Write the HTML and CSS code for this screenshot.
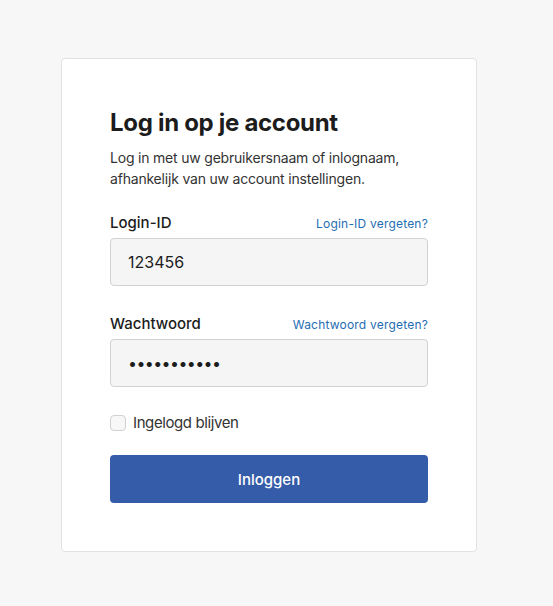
FILE: index.html
```html
<!DOCTYPE html>
<html>
<head>
    <title>Log in op je account</title>
    <meta name="viewport" content="width=device-width, initial-scale=1.0">
    <link rel="stylesheet" href="styles.css">
</head>
<body>
    <div class="card">
        <h1 class="title">Log in op je account</h1>
        <p class="intro">Log in met uw gebruikersnaam of inlognaam, afhankelijk van uw account instellingen.</p>

        <div class="field">
            <div class="field-head">
                <label for="login-id">Login-ID</label>
                <a href="#" class="link">Login-ID vergeten?</a>
            </div>
            <input id="login-id" class="input" type="text" value="123456">
        </div>

        <div class="field">
            <div class="field-head">
                <label for="password">Wachtwoord</label>
                <a href="#" class="link">Wachtwoord vergeten?</a>
            </div>
            <input id="password" class="input input-pass" type="password" value="geheimwoord">
        </div>

        <label class="remember">
            <span class="box"></span>
            Ingelogd blijven
        </label>

        <button class="button">Inloggen</button>
    </div>
</body>
</html>
```

FILE: styles.css
```css
body {
    font-family: Inter, "Noto Sans", sans-serif;
    background-color: #f7f7f7;
    color: #1c1c1c;
    margin: 0;
    padding: 58px 0 0 61px;
}
.card {
    width: 318px;
    padding: 49px 48px 48px 48px;
    background-color: #fff;
    border: 1px solid #e2e2e2;
    border-radius: 4px;
}
.title {
    font-size: 24px;
    line-height: 30px;
    font-weight: 700;
    letter-spacing: -0.3px;
    margin: 0 0 9px;
}
.intro {
    font-size: 14px;
    line-height: 21px;
    color: #333;
    letter-spacing: -0.2px;
    margin: 0 0 24px;
}
.field {
    margin-bottom: 28px;
}
.field-head {
    display: flex;
    justify-content: space-between;
    align-items: baseline;
    margin-bottom: 5px;
}
.field-head label {
    font-size: 15px;
    font-weight: 500;
    line-height: 20px;
}
.link {
    font-size: 12px;
    letter-spacing: 0.2px;
    color: #1f6db3;
    text-decoration: none;
}
.input {
    display: block;
    box-sizing: border-box;
    width: 100%;
    height: 48px;
    padding: 0 17px;
    font-family: inherit;
    font-size: 16px;
    color: #1c1c1c;
    background-color: #f5f5f5;
    border: 1px solid #d2d2d2;
    border-radius: 4px;
}
.input-pass {
    letter-spacing: -0.6px;
}
.remember {
    display: flex;
    align-items: center;
    gap: 7px;
    font-size: 15px;
    letter-spacing: -0.4px;
    color: #333;
    margin-top: -2px;
}
.box {
    width: 14px;
    height: 14px;
    border: 1px solid #d0d0d0;
    border-radius: 4px;
    background-color: #f7f7f7;
}
.button {
    display: block;
    width: 100%;
    height: 48px;
    margin-top: 23px;
    background-color: #355ca8;
    color: #fff;
    font-family: inherit;
    font-size: 15px;
    font-weight: 500;
    border: none;
    border-radius: 4px;
    cursor: pointer;
}
```
